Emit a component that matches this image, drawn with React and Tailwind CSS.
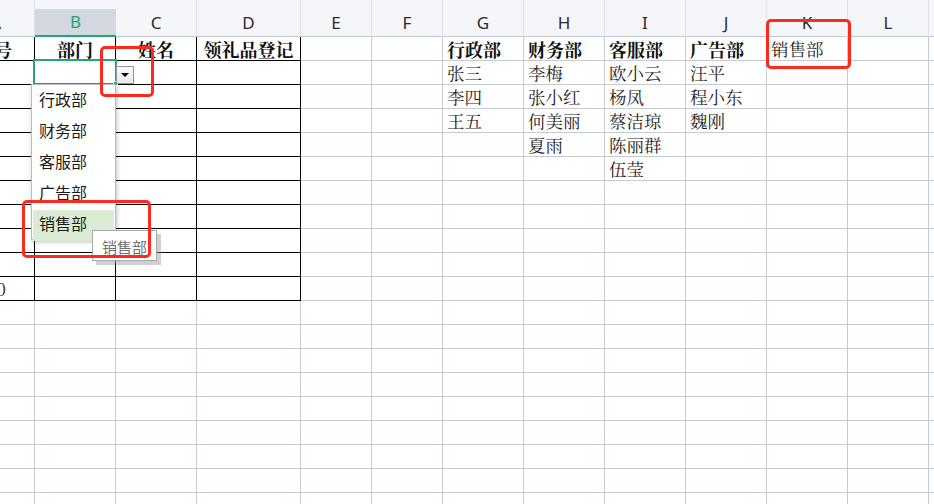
import React from "react";

const COLS = [
  { key: "A", w: 35 },
  { key: "B", w: 81 },
  { key: "C", w: 81 },
  { key: "D", w: 104 },
  { key: "E", w: 71 },
  { key: "F", w: 71 },
  { key: "G", w: 81 },
  { key: "H", w: 81 },
  { key: "I", w: 81 },
  { key: "J", w: 81 },
  { key: "K", w: 81 },
  { key: "L", w: 81 },
];

// row -> col -> [text, bold]
const DATA = {
  1: { A: ["序号", true], B: ["部门", true], C: ["姓名", true], D: ["领礼品登记", true], G: ["行政部", true], H: ["财务部", true], I: ["客服部", true], J: ["广告部", true], K: ["销售部", false] },
  2: { G: ["张三"], H: ["李梅"], I: ["欧小云"], J: ["汪平"] },
  3: { G: ["李四"], H: ["张小红"], I: ["杨凤"], J: ["程小东"] },
  4: { G: ["王五"], H: ["何美丽"], I: ["蔡洁琼"], J: ["魏刚"] },
  5: { H: ["夏雨"], I: ["陈丽群"] },
  6: { I: ["伍莹"] },
  11: { A: ["10"] },
};

const TABLE_COLS = ["A", "B", "C", "D"];
const ROWS = Array.from({ length: 20 }, (_, i) => i + 1);
const MENU = ["行政部", "财务部", "客服部", "广告部", "销售部"];

const cellFont = { fontFamily: '"Noto Serif CJK SC", "Noto Sans CJK SC", serif' };

function Cell({ col, row }) {
  const inTable = TABLE_COLS.includes(col.key) && row <= 11;
  const entry = DATA[row] && DATA[row][col.key];
  const centered = row === 1 && ["B", "C", "D"].includes(col.key);
  const isA = col.key === "A";
  return (
    <div
      style={{ width: col.w }}
      className={`h-[24px] shrink-0 border-r border-b flex items-center overflow-hidden whitespace-nowrap ${
        inTable ? "border-black" : "border-[#c5cad8]"
      } ${centered ? "justify-center" : isA ? "justify-end pr-[22px]" : "pl-[4px]"}`}
    >
      {entry && (
        <span
          style={cellFont}
          className={`leading-none ${entry[1] ? "text-[18px] font-bold text-[#111]" : "text-[17.5px] text-[#1f1f1f]"} ${
            isA && row === 11 ? "text-[#1c2a5a] pr-[6px]" : ""
          }`}
        >
          {entry[0]}
        </span>
      )}
    </div>
  );
}

export default function App() {
  return (
    <div className="relative w-[934px] h-[504px] overflow-hidden bg-white select-none">
      {/* column header */}
      <div className="h-[37px] flex bg-[#f4f6f9]">
        {COLS.map((c) => {
          const active = c.key === "B";
          return (
            <div
              key={c.key}
              style={{ width: c.w }}
              className={`shrink-0 h-full flex flex-col ${active ? "" : "border-r border-[#dde1e8]"}`}
            >
              <div className="h-[9px]" />
              <div
                className={`flex-1 flex items-center justify-center text-[17px] ${
                  active
                    ? "bg-[#d3d7df] text-[#1ea574] border-b-2 border-[#21a675]"
                    : "text-[#2a2a2a] border-b border-[#bfc5d3]"
                } ${c.key === "A" ? "justify-end pr-[33px]" : ""}`}
                style={{ fontFamily: '"Noto Sans", "Liberation Sans", sans-serif' }}
              >
                {c.key}
              </div>
            </div>
          );
        })}
        <div className="flex-1 flex flex-col">
          <div className="h-[9px]" />
          <div className="flex-1 border-b border-[#bfc5d3]" />
        </div>
      </div>

      {/* grid */}
      {ROWS.map((r) => (
        <div key={r} className="flex">
          {COLS.map((c) => (
            <Cell key={c.key} col={c} row={r} />
          ))}
          <div className="flex-1 h-[24px] border-b border-[#c5cad8]" />
        </div>
      ))}

      {/* selected cell B2 */}
      <div className="absolute left-[33px] top-[59px] w-[84px] h-[26px] border-2 border-[#21a675]" />
      <div className="absolute left-[113px] top-[81px] w-[5px] h-[5px] bg-[#21a675] border border-white" />

      {/* dropdown button */}
      <div className="absolute left-[116px] top-[66px] w-[18px] h-[18px] border border-[#8f969f] bg-gradient-to-b from-[#fbfbfc] to-[#e6e8eb] flex items-center justify-center">
        <div className="w-0 h-0 border-l-[4px] border-r-[4px] border-t-[4px] border-l-transparent border-r-transparent border-t-black" />
      </div>

      {/* dropdown list */}
      <div
        className="absolute left-[31px] top-[84px] w-[85px] h-[156px] bg-white border border-[#b9bcc2] shadow-[1px_2px_4px_rgba(0,0,0,0.25)] pt-[1px] px-[1px]"
        style={{ fontFamily: '"Noto Sans CJK SC", sans-serif' }}
      >
        {MENU.map((m, i) => (
          <div
            key={m}
            className={`h-[31px] flex items-center pl-[6px] pb-[5px] text-[16px] text-[#1b1b1b] ${
              i === 4 ? "bg-[#dcebd4]" : ""
            }`}
          >
            {m}
          </div>
        ))}
      </div>

      {/* tooltip */}
      <div
        className="absolute left-[92px] top-[230px] w-[65px] h-[31px] bg-white border border-[#a8a8a8] shadow-[4px_4px_0_rgba(150,150,150,0.45)] flex items-center justify-center pt-[4px] text-[15px] text-[#707070]"
        style={{ fontFamily: '"Noto Sans CJK SC", sans-serif' }}
      >
        销售部
      </div>

      {/* red annotation boxes */}
      <div className="absolute left-[100px] top-[46px] w-[54px] h-[51px] border-[3px] border-[#fe2a1e] rounded-[5px]" />
      <div className="absolute left-[22px] top-[200px] w-[129px] h-[58px] border-[3px] border-[#fe2a1e] rounded-[5px]" />
      <div className="absolute left-[766px] top-[19px] w-[85px] h-[50px] border-[3px] border-[#fe2a1e] rounded-[5px]" />
    </div>
  );
}
